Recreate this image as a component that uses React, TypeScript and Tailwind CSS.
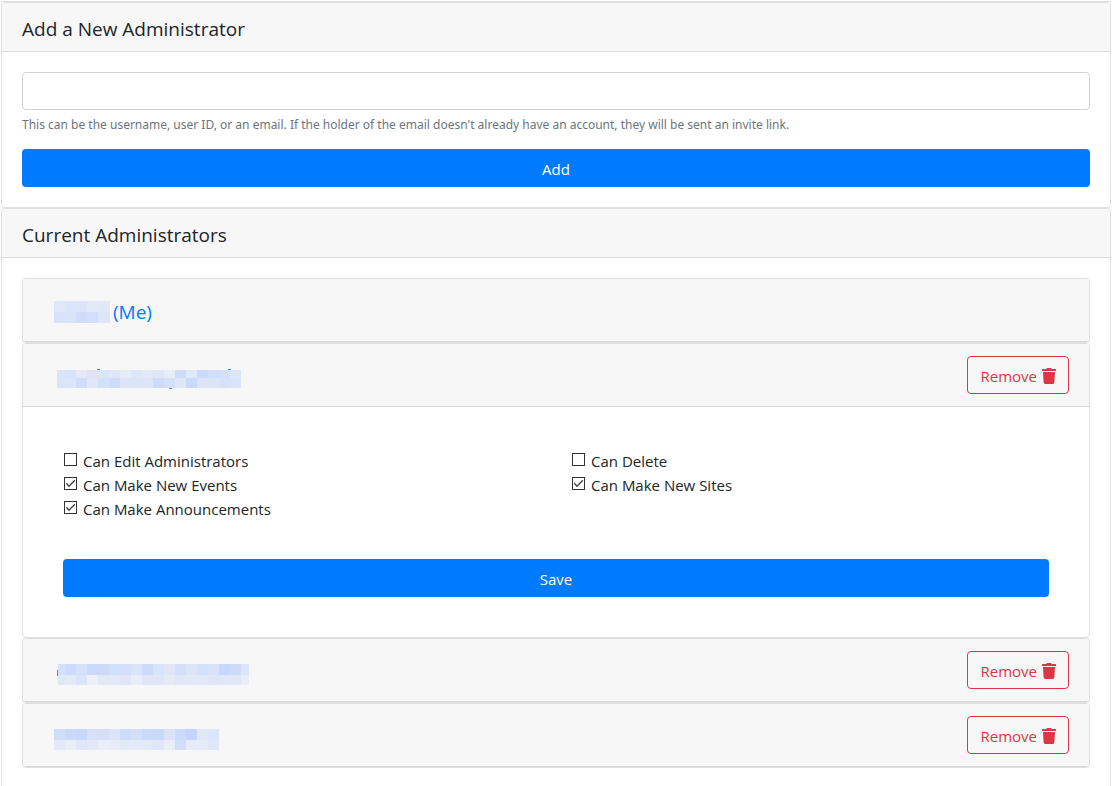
import { useState } from "react";
import type { ReactNode } from "react";
import { FaTrash } from "react-icons/fa";

type MosaicProps = {
  widths: number[];
  heights: number[];
  rows: string[][];
  marks?: [number, number, number, number][];
  label: string;
};

const span = (first: number, count: number, last?: number) => [
  first,
  ...Array(count).fill(11),
  ...(last ? [last] : []),
];

const sum = (values: number[]) => values.reduce((a, b) => a + b, 0);

function Mosaic({ widths, heights, rows, marks = [], label }: MosaicProps) {
  const width = sum(widths);
  const height = sum(heights);
  return (
    <svg
      role="img"
      aria-label={label}
      width={width}
      height={height}
      viewBox={`0 0 ${width} ${height}`}
      shapeRendering="crispEdges"
      className="shrink-0 overflow-visible"
    >
      {marks.map(([x, y, w, h]) => (
        <rect key={`${x}-${y}`} x={x} y={y} width={w} height={h} fill="#3f8ff5" />
      ))}
      {rows.map((row, r) =>
        row.map((color, c) => (
          <rect
            key={`${r}-${c}`}
            x={sum(widths.slice(0, c))}
            y={sum(heights.slice(0, r))}
            width={widths[c]}
            height={heights[r]}
            fill={color}
          />
        )),
      )}
    </svg>
  );
}

const firstName: MosaicProps = {
  label: "Hidden name",
  widths: span(11, 3, 12),
  heights: [11, 11],
  rows: [
    ["#e0e7f8", "#dae4fa", "#dde5f9", "#e2e9f7", "#e1e8f7"],
    ["#d8e2fa", "#d9e4fa", "#d0dcfa", "#d3dffa", "#dde6f8"],
  ],
};

const secondName: MosaicProps = {
  label: "Hidden name",
  widths: span(8, 16),
  heights: [8, 10],
  marks: [
    [40, -1, 3, 1],
    [171, -1, 3, 1],
    [112, 18, 3, 1],
  ],
  rows: [
    ["#dbe4f8", "#d7e3f8", "#e5e8f7", "#e2e4f6", "#d9e5f9", "#e0e7f7", "#e6ebf8", "#dee7f7", "#e3e9f7", "#e0e8f7", "#e7ecf8", "#cfdbfa", "#e0e9f6", "#cbdafc", "#d1defa", "#d5defa", "#dde7f7"],
    ["#dae4f9", "#dae5f9", "#d1dcfa", "#dfe7f8", "#d2e0fa", "#cedcfa", "#dde3f9", "#dbe4f8", "#dbe4f8", "#cfdbfa", "#d3e0fb", "#e0e7f8", "#cbdafb", "#dce4f8", "#dce4f8", "#d8e0fa", "#dae4f8"],
  ],
};

const thirdName: MosaicProps = {
  label: "Hidden name",
  widths: span(7, 16, 8),
  heights: [11, 10],
  marks: [[-1, 6, 1, 6]],
  rows: [
    ["#d4e0fa", "#cedbfa", "#d5e0f9", "#cad9fb", "#ced9f9", "#d1e0fa", "#d2defa", "#d8e4f8", "#cedaf9", "#d8e4fb", "#e0e6f8", "#d4e0fa", "#dde4f7", "#d4e1fb", "#d8e2f9", "#c7d8fa", "#cedaf9", "#dbe6fb"],
    ["#e0e8f7", "#e2eaf8", "#dce4fa", "#edf0f8", "#e1e9f7", "#e1e8f7", "#e0e6f7", "#e9edf8", "#e0e6f7", "#dfe6f8", "#e6eaf7", "#e0e7f8", "#e1e8f7", "#e1e8f8", "#e0e6f7", "#e0e7f8", "#e0e8f7", "#e9edf8"],
  ],
};

const fourthName: MosaicProps = {
  label: "Hidden name",
  widths: span(11, 14),
  heights: [11, 10],
  rows: [
    ["#d0ddf9", "#c8d9fb", "#c7d8fa", "#d5e0f9", "#d7dff8", "#dbe4f8", "#cddcfb", "#d4dff9", "#c9dafc", "#c8dafb", "#dce2f7", "#cbdafb", "#c4d4fa", "#e0e8f8", "#dce5fa"],
    ["#e3e9f7", "#e8edf8", "#e1e7f8", "#e4e8f7", "#ebeef8", "#e7ecf8", "#e2e9f7", "#e4eaf7", "#e2e9f7", "#dfe7f8", "#e9eef8", "#d1def8", "#e5ebf8", "#e6ebf8", "#e0e7f8"],
  ],
};

function Panel({ title, children }: { title: string; children: ReactNode }) {
  return (
    <section className="rounded border border-[#dfdfdf] bg-white">
      <header className="rounded-t border-b border-[#dcdcdc] bg-[#f7f7f7] px-5 pt-3.5 pb-2.5">
        <h2 className="text-[19px] leading-6">{title}</h2>
      </header>
      <div className="p-5">{children}</div>
    </section>
  );
}

function PrimaryButton({ children }: { children: ReactNode }) {
  return (
    <button
      type="submit"
      className="block h-[38px] w-full cursor-pointer rounded bg-[#007bff] pt-px text-center text-white hover:bg-[#0069d9]"
    >
      {children}
    </button>
  );
}

type AdminProps = {
  name: MosaicProps;
  me?: boolean;
  indent?: string;
  children?: ReactNode;
};

function AdminCard({ name, me, indent = "pl-[31px]", children }: AdminProps) {
  return (
    <article className="rounded border border-[#dfdfdf] bg-white">
      <header
        className={`flex h-[63px] items-center justify-between rounded-t border-b border-[#d8d8d8] bg-[#f7f7f7] pr-5 ${indent}`}
      >
        <a
          href="#admin"
          className={`flex items-center gap-[3px] text-[19px] leading-6 text-[#007bff] ${me ? "pt-1" : "pt-2"}`}
        >
          <Mosaic {...name} />
          {me && <span>(Me)</span>}
        </a>
        {!me && (
          <button
            type="button"
            className="flex h-[38px] cursor-pointer items-center gap-[5px] rounded border border-[#dc3545] px-3 pt-0.5 text-[#dc3545] hover:bg-[#dc3545] hover:text-white"
          >
            <span>Remove</span>
            <FaTrash className="h-4 w-3.5" aria-hidden />
          </button>
        )}
      </header>
      {children}
    </article>
  );
}

function Permission({ label, initial = false }: { label: string; initial?: boolean }) {
  const [checked, setChecked] = useState(initial);
  return (
    <label className="flex h-6 items-center gap-1.5 pl-px">
      <span className="mb-1 grid size-[13px] shrink-0">
        <input
          type="checkbox"
          checked={checked}
          onChange={(e) => setChecked(e.target.checked)}
          className="peer col-start-1 row-start-1 size-[13px] appearance-none border border-[#333333] bg-white"
        />
        <svg
          viewBox="0 0 13 13"
          aria-hidden
          className="pointer-events-none invisible col-start-1 row-start-1 size-[13px] peer-checked:visible"
        >
          <path d="M2.3 6.3 5 9.2 10.8 3.3" fill="none" stroke="#404040" strokeWidth="1.3" />
        </svg>
      </span>
      <span>{label}</span>
    </label>
  );
}

export default function App() {
  return (
    <main className="bg-white pr-[3px] pl-px font-['Open_Sans','Noto_Sans',sans-serif] text-[15px] leading-6 text-[#212529]">
      <div className="h-0.5 border-b border-[#dfdfdf]" />
      <Panel title="Add a New Administrator">
        <form onSubmit={(e) => e.preventDefault()}>
          <input
            type="text"
            aria-label="New administrator"
            aria-describedby="admin-help"
            className="block h-[38px] w-full rounded border border-[#ced4da] bg-white px-3 outline-none focus:border-[#80bdff]"
          />
          <p
            id="admin-help"
            className="mt-[5px] mb-[15px] font-['Noto_Sans','Open_Sans',sans-serif] text-[12px] leading-[19px] text-[#6c757d]"
          >
            This can be the username, user ID, or an email. If the holder of the email doesn't already have an account,
            they will be sent an invite link.
          </p>
          <PrimaryButton>Add</PrimaryButton>
        </form>
      </Panel>
      <Panel title="Current Administrators">
        <AdminCard name={firstName} me />
        <AdminCard name={secondName} indent="pl-[34px]">
          <form onSubmit={(e) => e.preventDefault()} className="p-10">
            <div className="mb-[38px] grid grid-cols-2 gap-x-[30px] pt-0.5">
              <div>
                <Permission label="Can Edit Administrators" />
                <Permission label="Can Make New Events" initial />
                <Permission label="Can Make Announcements" initial />
              </div>
              <div>
                <Permission label="Can Delete" />
                <Permission label="Can Make New Sites" initial />
              </div>
            </div>
            <PrimaryButton>Save</PrimaryButton>
          </form>
        </AdminCard>
        <AdminCard name={thirdName} indent="pl-[35px]" />
        <AdminCard name={fourthName} />
      </Panel>
    </main>
  );
}
